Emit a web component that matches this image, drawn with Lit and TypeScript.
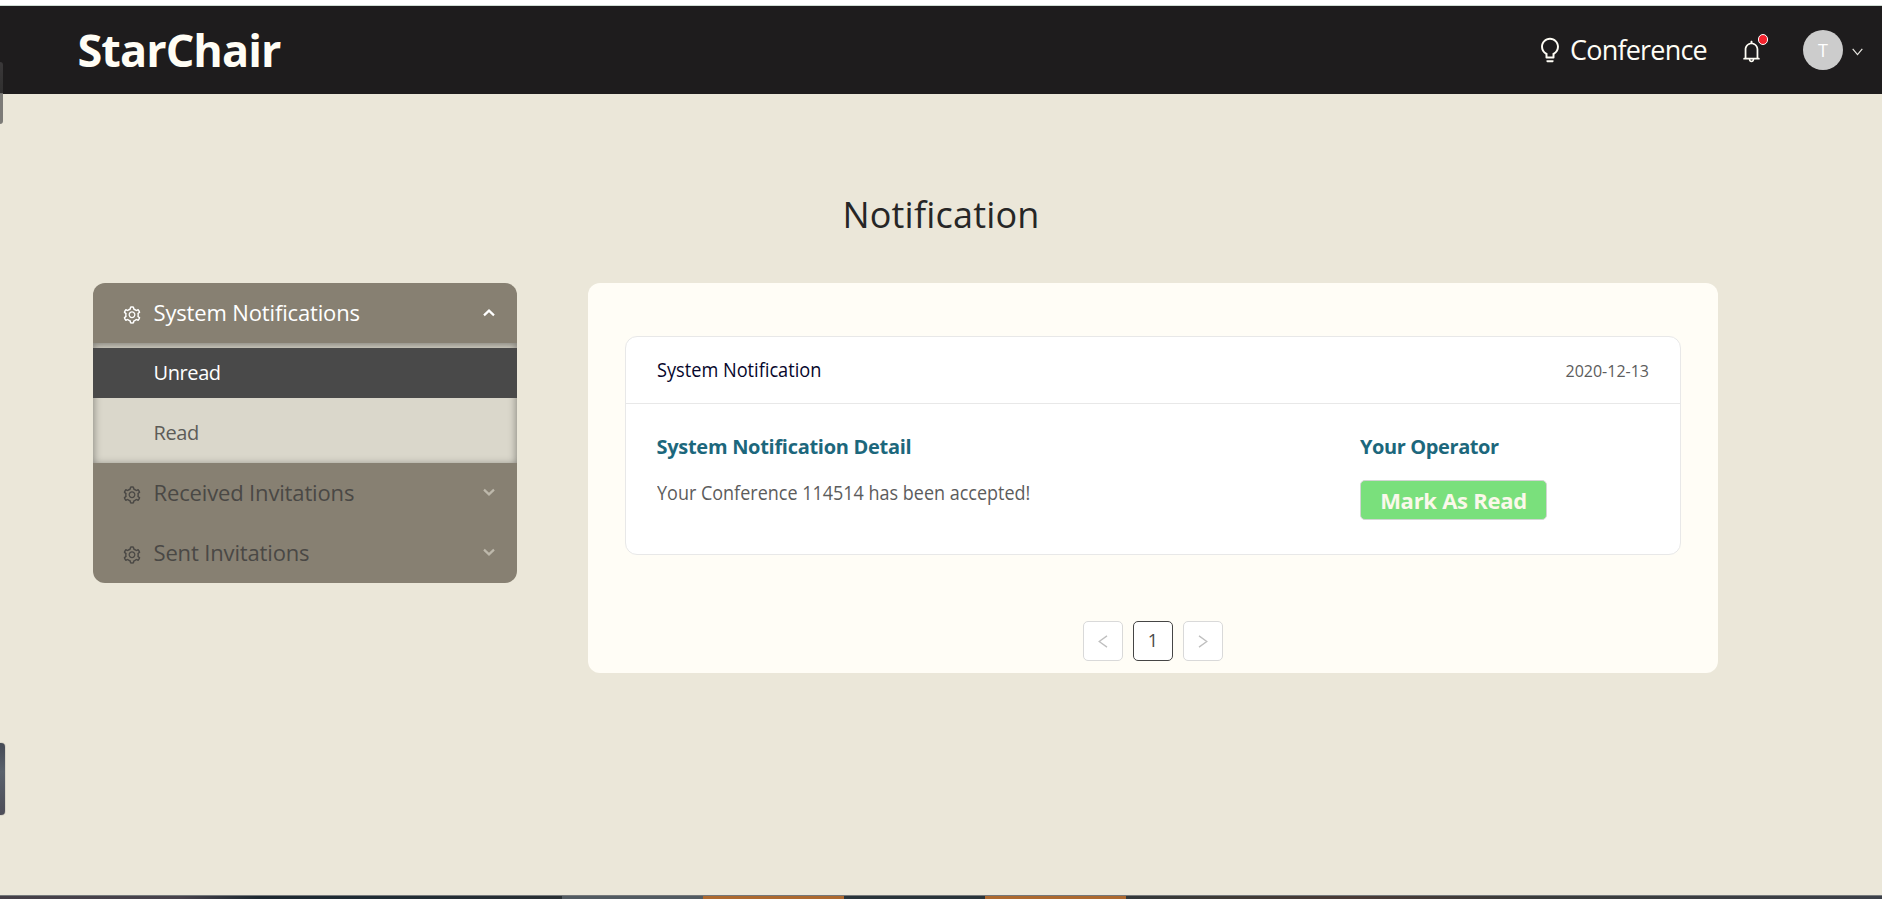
import { LitElement, html, css, svg } from "lit";
import { classMap } from "lit/directives/class-map.js";

const BULB =
  "M632 888H392c-4.4 0-8 3.6-8 8v32c0 17.7 14.3 32 32 32h192c17.7 0 32-14.3 32-32v-32c0-4.4-3.6-8-8-8zM512 64c-181.1 0-328 146.9-328 328 0 121.4 66 227.4 164 284.1V792c0 17.7 14.3 32 32 32h264c17.7 0 32-14.3 32-32V676.1c98-56.7 164-162.7 164-284.1 0-181.1-146.9-328-328-328zm127.9 549.8L604 634.6V752H420V634.6l-35.9-20.8C305.4 568.3 256 484.5 256 392c0-141.4 114.6-256 256-256s256 114.6 256 256c0 92.5-49.4 176.3-128.1 221.8z";
const BELL =
  "M816 768h-24V428c0-141.1-104.3-257.7-240-277.1V112c0-22.1-17.9-40-40-40s-40 17.9-40 40v38.9c-135.7 19.4-240 136-240 277.1v340h-24c-17.7 0-32 14.3-32 32v32c0 4.4 3.6 8 8 8h216c0 61.8 50.2 112 112 112s112-50.2 112-112h216c4.4 0 8-3.6 8-8v-32c0-17.7-14.3-32-32-32zM512 888c-26.5 0-48-21.5-48-48h96c0 26.5-21.5 48-48 48zM304 768V428c0-55.6 21.6-107.8 60.9-147.1S456.4 220 512 220c55.6 0 107.8 21.6 147.1 60.9S720 372.4 720 428v340H304z";
const GEAR =
  "M924.8 625.7l-65.5-56c3.1-19 4.7-38.4 4.7-57.8s-1.6-38.8-4.7-57.8l65.5-56a32.03 32.03 0 009.3-35.2l-.9-2.6a443.74 443.74 0 00-79.7-137.9l-1.8-2.1a32.12 32.12 0 00-35.1-9.5l-81.3 28.9c-30-24.6-63.5-44-99.7-57.6l-15.7-85a32.05 32.05 0 00-25.8-25.7l-2.7-.5c-52.1-9.4-106.9-9.4-159 0l-2.7.5a32.05 32.05 0 00-25.8 25.7l-15.8 85.4a351.86 351.86 0 00-99 57.4l-81.9-29.1a32 32 0 00-35.1 9.5l-1.8 2.1a446.02 446.02 0 00-79.7 137.9l-.9 2.6c-4.5 12.5-.8 26.5 9.3 35.2l66.3 56.6c-3.1 18.8-4.6 38-4.6 57.1 0 19.2 1.5 38.4 4.6 57.1L99 625.5a32.03 32.03 0 00-9.3 35.2l.9 2.6c18.1 50.4 44.9 96.9 79.7 137.9l1.8 2.1a32.12 32.12 0 0035.1 9.5l81.9-29.1c29.8 24.5 63.1 43.9 99 57.4l15.8 85.4a32.05 32.05 0 0025.8 25.7l2.7.5a449.4 449.4 0 00159 0l2.7-.5a32.05 32.05 0 0025.8-25.7l15.7-85a350 350 0 0099.7-57.6l81.3 28.9a32 32 0 0035.1-9.5l1.8-2.1c34.8-41.1 61.6-87.5 79.7-137.9l.9-2.6c4.5-12.3.8-26.3-9.3-35zM788.3 465.9c2.5 15.1 3.8 30.6 3.8 46.1s-1.3 31-3.8 46.1l-6.6 40.1 74.7 63.9a370.03 370.03 0 01-42.6 73.6L721 702.8l-31.4 25.8c-23.9 19.6-50.5 35-79.3 45.8l-38.1 14.3-17.9 97a377.5 377.5 0 01-85 0l-17.9-97.2-37.8-14.5c-28.5-10.8-55-26.2-78.7-45.7l-31.4-25.9-93.4 33.2c-17-22.9-31.2-47.6-42.6-73.6l75.5-64.5-6.5-40c-2.4-14.9-3.7-30.3-3.7-45.5 0-15.3 1.2-30.6 3.7-45.5l6.5-40-75.5-64.5c11.3-26.1 25.6-50.7 42.6-73.6l93.4 33.2 31.4-25.9c23.7-19.5 50.2-34.9 78.7-45.7l37.9-14.3 17.9-97.2c28.1-3.2 56.8-3.2 85 0l17.9 97 38.1 14.3c28.7 10.8 55.4 26.2 79.3 45.8l31.4 25.8 92.8-32.9c17 22.9 31.2 47.6 42.6 73.6L781.8 426l6.5 39.9zM512 326c-97.2 0-176 78.8-176 176s78.8 176 176 176 176-78.8 176-176-78.8-176-176-176zm79.2 255.2A111.6 111.6 0 01512 614c-29.9 0-58-11.7-79.2-32.8A111.6 111.6 0 01400 502c0-29.9 11.7-58 32.8-79.2C454 401.6 482.1 390 512 390c29.9 0 58 11.6 79.2 32.8A111.6 111.6 0 01624 502c0 29.9-11.7 58-32.8 79.2z";

const glyph = (d: string, size: number) => html`<svg
  width=${size}
  height=${size}
  viewBox="0 0 1024 1024"
  fill="currentColor"
>
  ${svg`<path d=${d}></path>`}
</svg>`;

const line = (points: string, w: number, h: number, stroke: number) => html`<svg
  width=${w}
  height=${h}
  viewBox="0 0 ${w} ${h}"
  fill="none"
  stroke="currentColor"
  stroke-width=${stroke}
>
  ${svg`<polyline points=${points}></polyline>`}
</svg>`;

class TopBar extends LitElement {
  static styles = css`
    :host {
      display: flex;
      align-items: center;
      height: 88px;
      box-sizing: border-box;
      padding: 0 19px 0 77.5px;
      background: #1e1c1d;
      color: #fffdf5;
    }
    svg {
      display: block;
      flex: none;
    }
    .brand {
      flex: 1;
      font-size: 45px;
      font-weight: 700;
      line-height: 60px;
      padding-bottom: 1px;
      letter-spacing: -0.95px;
    }
    .link {
      display: flex;
      align-items: center;
      gap: 6px;
      width: 171px;
      margin-right: 32px;
      padding-bottom: 1px;
      font-size: 27px;
      line-height: 40px;
      letter-spacing: -0.8px;
      white-space: nowrap;
    }
    .label {
      padding-top: 1px;
    }
    .bell {
      position: relative;
      margin-right: 39px;
      padding-top: 2px;
    }
    .dot {
      position: absolute;
      right: -4px;
      top: -3px;
      width: 8px;
      height: 9px;
      border: 1px solid #fff;
      border-radius: 5px;
      background: #f5222d;
    }
    .avatar {
      width: 40px;
      height: 40px;
      border-radius: 50%;
      background: #ccc;
      color: #fff;
      font-size: 18px;
      line-height: 40px;
      text-align: center;
      margin-right: 9px;
    }
    .caret {
      padding-top: 3px;
      color: #e8e6e0;
    }
  `;
  render() {
    return html`
      <div class="brand">StarChair</div>
      <div class="link">${glyph(BULB, 28)}<span class="label">Conference</span></div>
      <div class="bell">${glyph(BELL, 25)}<span class="dot"></span></div>
      <div class="avatar">T</div>
      <div class="caret">${line("0.7,0.8 5.5,6.6 10.3,0.8", 11, 8, 1.2)}</div>
    `;
  }
}
customElements.define("top-bar", TopBar);

class SideMenu extends LitElement {
  static styles = css`
    :host {
      display: block;
      width: 424px;
      border-radius: 12px;
      overflow: hidden;
      background: #878072;
      color: #4a4845;
    }
    svg {
      display: block;
      flex: none;
    }
    .row {
      display: flex;
      align-items: center;
      height: 60px;
      box-sizing: border-box;
      padding: 0 22px 0 29px;
      font-size: 22px;
      letter-spacing: -0.15px;
      line-height: 58px;
    }
    .row.open {
      color: #fff;
    }
    .gear {
      padding-top: 3px;
      margin-right: 11.5px;
    }
    .title {
      flex: 1;
      padding-bottom: 2px;
    }
    .arrow {
      color: #bdb8ab;
      padding-bottom: 2px;
    }
    .open .arrow {
      color: #fff;
      padding-bottom: 0;
    }
    .sub {
      padding: 5px 0;
      background: #dad7cb;
      box-shadow: inset 0 2px 8px rgba(0, 0, 0, 0.45);
    }
    .item {
      height: 50px;
      padding-left: 60.5px;
      font-size: 20px;
      line-height: 50px;
      letter-spacing: -0.4px;
      color: #5d5c58;
    }
    .item + .item {
      margin-top: 10px;
    }
    .item.active {
      background: #494949;
      color: #fff;
    }
  `;
  private row(title: string, open: boolean) {
    return html`<div class=${classMap({ row: true, open })}>
      <span class="gear">${glyph(GEAR, 20)}</span>
      <span class="title">${title}</span>
      <span class="arrow"
        >${line(open ? "1,6.4 6,1.6 11,6.4" : "1,1.6 6,6.4 11,1.6", 12, 8, 2.2)}</span
      >
    </div>`;
  }
  render() {
    return html`
      ${this.row("System Notifications", true)}
      <div class="sub">
        <div class="item active">Unread</div>
        <div class="item">Read</div>
      </div>
      ${this.row("Received Invitations", false)} ${this.row("Sent Invitations", false)}
    `;
  }
}
customElements.define("side-menu", SideMenu);

class NoticePanel extends LitElement {
  static styles = css`
    :host {
      display: flex;
      flex-direction: column;
      width: 1130px;
      height: 390px;
      box-sizing: border-box;
      padding: 53px 37px 0;
      border-radius: 12px;
      background: #fffdf6;
    }
    .card {
      height: 219px;
      box-sizing: border-box;
      border: 1px solid #e8e8e8;
      border-radius: 12px;
      background: #fff;
      white-space: nowrap;
    }
    .head {
      display: flex;
      justify-content: space-between;
      height: 67px;
      box-sizing: border-box;
      padding: 0 31px 0 30.5px;
      border-bottom: 1px solid #e8e8e8;
      line-height: 65px;
    }
    .name {
      font-size: 19.3px;
      color: #06062b;
      transform: scaleX(0.943);
      transform-origin: left;
    }
    .date {
      font-size: 16px;
      line-height: 69px;
      color: #5c5c5c;
    }
    .body {
      display: flex;
      padding: 28px 30.5px;
    }
    .detail {
      width: 703.5px;
    }
    .caption {
      margin-bottom: 18px;
      font-size: 20px;
      font-weight: 700;
      line-height: 30px;
      letter-spacing: -0.29px;
      color: #1c677c;
    }
    .operator .caption {
      letter-spacing: -0.4px;
    }
    .text {
      font-size: 19.3px;
      line-height: 26px;
      color: #5c5c5c;
      transform: scaleX(0.933);
      transform-origin: left;
    }
    .mark {
      display: block;
      width: 187px;
      height: 40px;
      box-sizing: border-box;
      padding: 0;
      border: 1px solid #d2d6d2;
      border-radius: 5px;
      background: #7ae07c;
      color: #fbf8ea;
      font: 700 22px/38px "Open Sans", "Noto Sans", sans-serif;
      letter-spacing: -0.27px;
    }
    .pages {
      display: flex;
      justify-content: center;
      gap: 10px;
      margin-top: 66px;
    }
    .page {
      display: flex;
      align-items: center;
      justify-content: center;
      width: 40px;
      height: 40px;
      box-sizing: border-box;
      border: 1px solid #d9d9d9;
      border-radius: 5px;
      background: #fff;
      color: #bfbfbf;
      font-size: 18px;
      line-height: 36px;
    }
    .page.current {
      border-color: #454545;
      color: #494949;
      padding-bottom: 2px;
    }
    .step {
      padding-top: 1px;
    }
    .page svg {
      display: block;
    }
  `;
  render() {
    return html`
      <div class="card">
        <div class="head">
          <span class="name">System Notification</span>
          <span class="date">2020-12-13</span>
        </div>
        <div class="body">
          <div class="detail">
            <div class="caption">System Notification Detail</div>
            <div class="text">Your Conference 114514 has been accepted!</div>
          </div>
          <div class="operator">
            <div class="caption">Your Operator</div>
            <button class="mark">Mark As Read</button>
          </div>
        </div>
      </div>
      <div class="pages">
        <div class="page step">${line("9,0.9 1.2,6.5 9,12.1", 10, 13, 1.3)}</div>
        <div class="page current">1</div>
        <div class="page step">${line("1,0.9 8.8,6.5 1,12.1", 10, 13, 1.3)}</div>
      </div>
    `;
  }
}
customElements.define("notice-panel", NoticePanel);

class AppRoot extends LitElement {
  static styles = css`
    :host {
      position: relative;
      display: flex;
      flex-direction: column;
      height: 899px;
      overflow: hidden;
      box-sizing: border-box;
      border-top: 5px solid #fff;
      background: #ebe7d9;
      font-family: "Open Sans", "Noto Sans", sans-serif;
    }
    .hairline {
      height: 1px;
      background: #cfdcd4;
    }
    h1 {
      margin: 96px 0 0;
      font-size: 36px;
      font-weight: 400;
      line-height: 50px;
      letter-spacing: 0.2px;
      text-align: center;
      color: #262626;
    }
    main {
      display: flex;
      align-items: flex-start;
      flex: 1;
      gap: 71px;
      padding: 43px 0 0 93px;
    }
    .strip {
      display: flex;
      height: 4px;
      box-sizing: border-box;
      border-top: 1px solid #74787a;
    }
    .tile {
      width: 141px;
    }
    .lead {
      width: 562px;
      background: linear-gradient(90deg, #454048, #48434c 32%, #1d2830 46%, #1f2c34 66%, #292f33);
    }
    .slate {
      background: #525b61;
    }
    .orange {
      background: #ad692f;
    }
    .dark {
      background: #29343a;
    }
    .rest {
      flex: 1;
      background: linear-gradient(90deg, #33383a, #3e3b36 12%, #4b3b36 30%, #3a3c3b 55%, #3c4048);
    }
    .tab {
      position: absolute;
      left: 0;
      width: 2.5px;
      top: 57px;
      height: 62px;
      border-radius: 0 4px 4px 0;
      background: linear-gradient(#3a3839, #302f2f 50%, #7c7b77 51%, #7c7b77);
    }
    .tab.low {
      top: 738px;
      width: 4.5px;
      height: 72px;
      background: linear-gradient(#454a55, #5a626c 40%, #4d4d58);
      box-shadow: 0 0 1px #333;
    }
  `;
  render() {
    return html`
      <div class="hairline"></div>
      <top-bar></top-bar>
      <h1>Notification</h1>
      <main>
        <side-menu></side-menu>
        <notice-panel></notice-panel>
      </main>
      <div class="strip">
        <div class="lead"></div>
        <div class="tile slate"></div>
        <div class="tile orange"></div>
        <div class="tile dark"></div>
        <div class="tile orange"></div>
        <div class="rest"></div>
      </div>
      <div class="tab"></div>
      <div class="tab low"></div>
    `;
  }
}
customElements.define("app-root", AppRoot);
